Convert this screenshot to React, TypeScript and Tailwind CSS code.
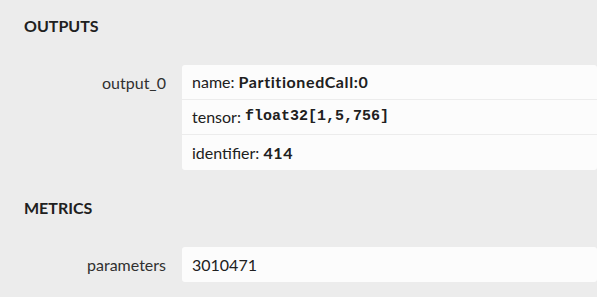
import React from 'react';

const sans = "font-['Lato','Noto_Sans',sans-serif]";
const mono = "font-['Liberation_Mono','DejaVu_Sans_Mono',monospace]";

function Section({ title, children }: { title: string; children: React.ReactNode }) {
  return (
    <div>
      <h2 className="pl-6 mt-4 mb-[29px] h-5 leading-5 text-[16px] font-bold text-[#202020]">{title}</h2>
      <div className="flex flex-col">{children}</div>
    </div>
  );
}

function Row({ label, children }: { label: string; children: React.ReactNode }) {
  return (
    <div className="flex items-start">
      <div className="w-[166px] shrink-0 text-right h-[35px] leading-[35px] text-[16px] text-[#303030]">{label}</div>
      <div className="ml-4 flex-1 rounded-[3px] bg-[#fcfcfc] flex flex-col divide-y divide-[#ececec]">
        {children}
      </div>
    </div>
  );
}

function Line({ children }: { children: React.ReactNode }) {
  return <div className="h-[35px] flex items-center px-[10px] text-[16px] text-[#202020]">{children}</div>;
}

export default function App() {
  return (
    <div className={`w-[597px] h-[297px] overflow-hidden bg-[#ececec] ${sans}`}>
      <Section title="OUTPUTS">
        <Row label="output_0">
          <Line>
            name:&nbsp;<b className="tracking-[0.6px]">PartitionedCall:0</b>
          </Line>
          <Line>
            tensor:&nbsp;<b className={`${mono} text-[15px]`}>float32[1,5,756]</b>
          </Line>
          <Line>
            identifier:&nbsp;<b className="tracking-[0.6px]">414</b>
          </Line>
        </Row>
      </Section>
      <div className="h-3" />
      <Section title="METRICS">
        <Row label="parameters">
          <Line>3010471</Line>
        </Row>
      </Section>
    </div>
  );
}
